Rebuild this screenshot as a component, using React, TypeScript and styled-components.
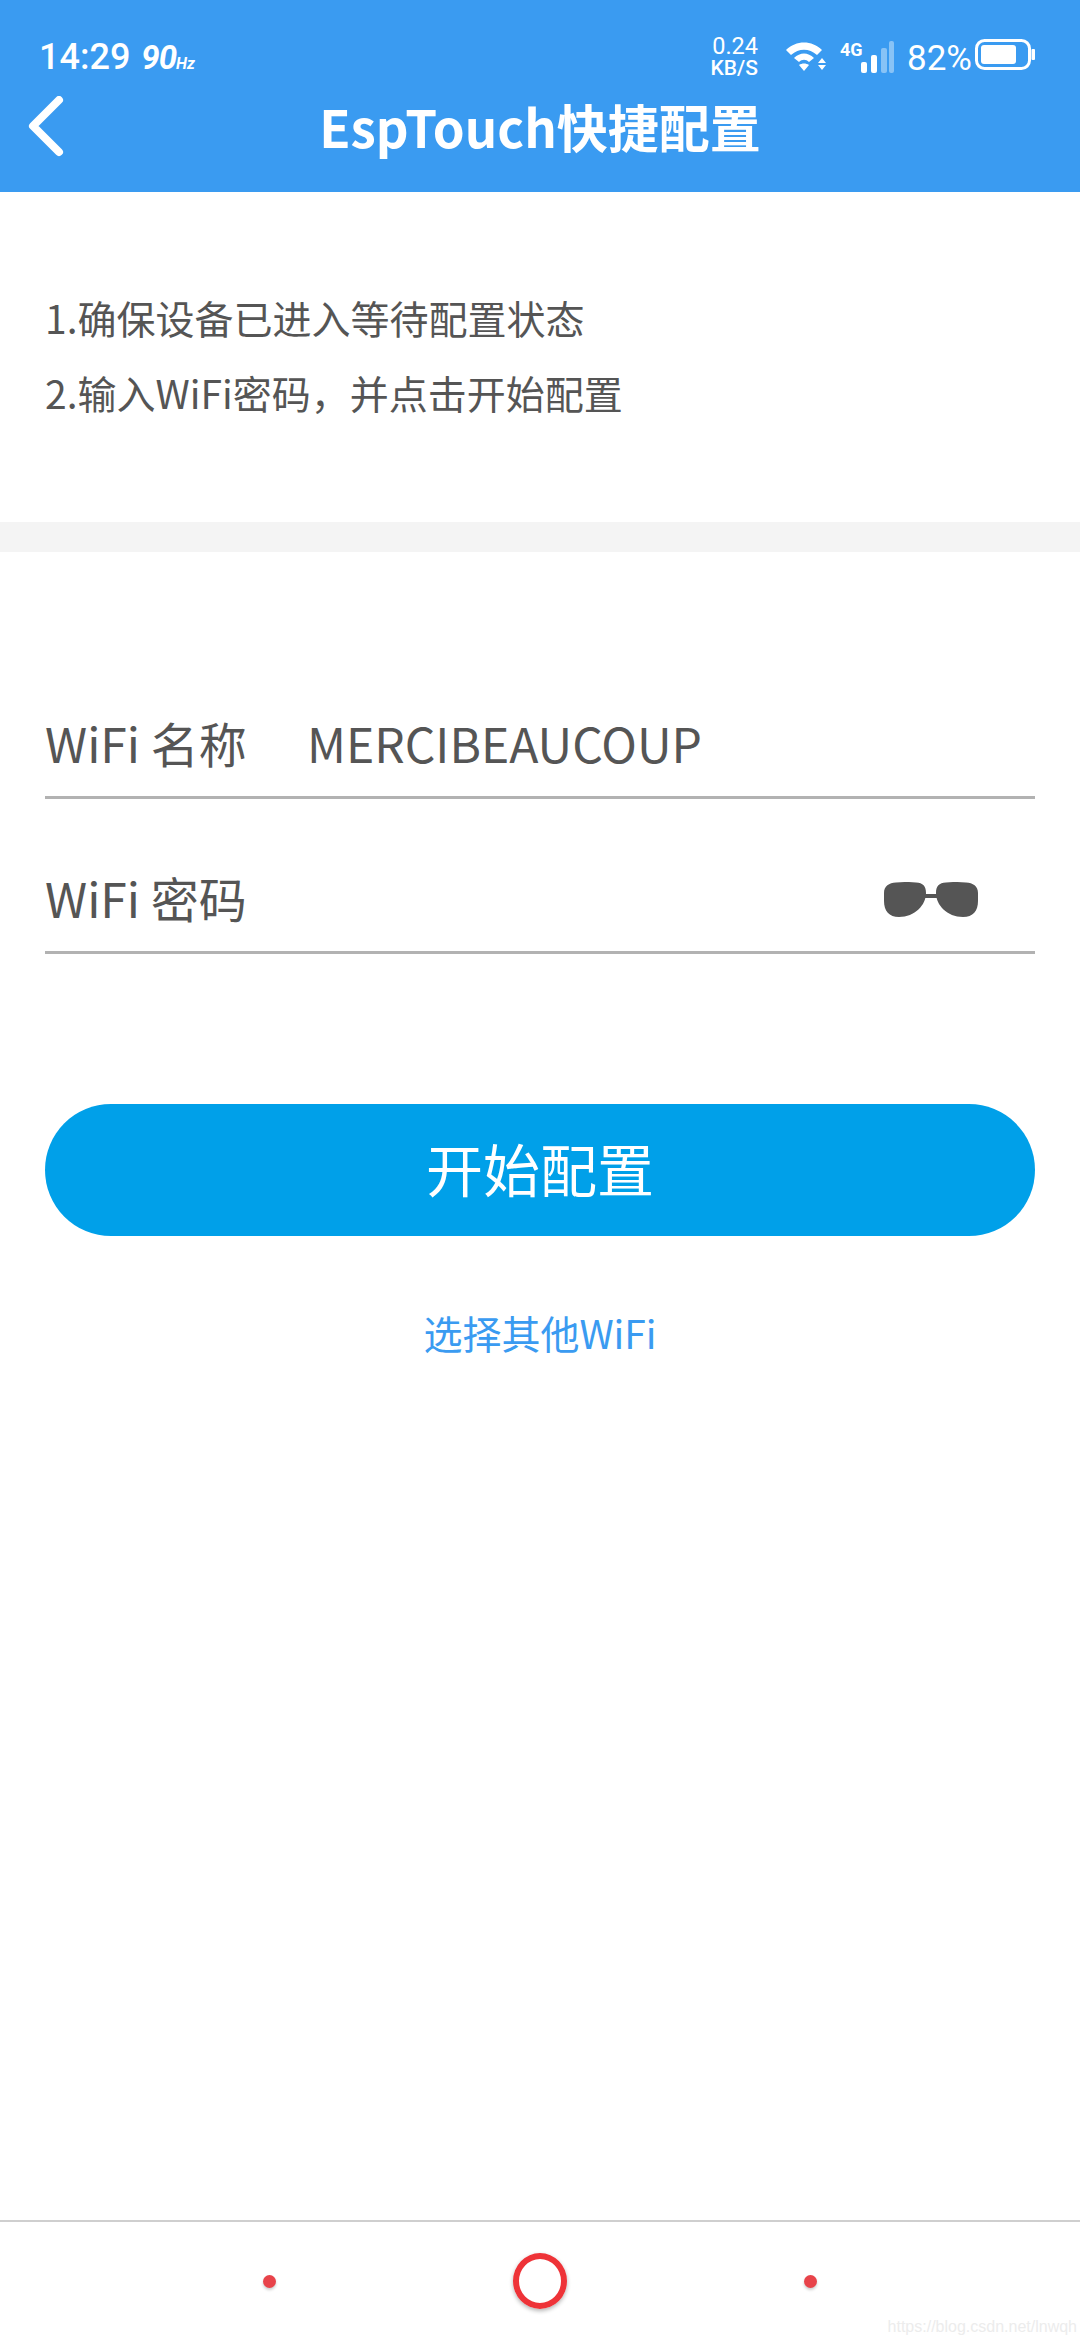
import React from "react";
import styled, { createGlobalStyle } from "styled-components";

const Global = createGlobalStyle`
  html, body { margin: 0; padding: 0; background: #fff; }
  #root { width: 1080px; height: 2340px; }
`;
const cjk = `"Noto Sans CJK SC", "Noto Sans", sans-serif`;
const Page = styled.div`
  width: 1080px; height: 2340px; display: flex; flex-direction: column; background: #fff;
  font-family: ${cjk}; position: relative; overflow: hidden;
`;
const Header = styled.header`
  height: 192px; background: #3a9bf1; color: #fff; display: flex; flex-direction: column; flex: none;
`;
const StatusBar = styled.div`
  height: 96px; padding: 32px 45px 0 39px; box-sizing: border-box; display: flex; align-items: flex-start; justify-content: space-between;
  font-family: Roboto, sans-serif;
`;
const StatusLeft = styled.div`display: flex; align-items: baseline; height: 50px; box-sizing: border-box;`;
const Clock = styled.span`font-size: 36px; line-height: 50px; font-weight: 500;`;
const Hz = styled.span`font-size: 33px; line-height: 50px; font-style: italic; font-weight: 700; margin-left: 11px; letter-spacing: -1px;`;
const HzUnit = styled.span`font-size: 16px; font-style: italic; font-weight: 700; margin-left: 0;`;
const StatusRight = styled.div`display: flex; align-items: flex-start;`;
const Speed = styled.div`
  display: flex; flex-direction: column; align-items: flex-end; width: 54px; margin: 3px 0 0 0;
`;
const SpeedVal = styled.span`font-size: 23.5px; line-height: 22px; font-weight: 400;`;
const SpeedUnit = styled.span`font-size: 21px; line-height: 22px; font-weight: 500;`;
const Percent = styled.span`font-size: 35px; line-height: 46px; font-weight: 400; margin: 4px 3px 0 13px;`;
const IconSvg = styled.svg`display: block; flex: none; overflow: visible;`;
const Nav = styled.div`
  flex: 1; position: relative; display: flex; justify-content: center; align-items: flex-start;
`;
const BackIcon = styled.svg`position: absolute; left: 28px; top: 0;`;
const Title = styled.h1`
  margin: 0; font-size: 51px; font-weight: 700; line-height: 60px; position: relative;
  font-family: ${cjk};
`;
const Intro = styled.section`
  height: 330px; flex: none; box-sizing: border-box; padding: 88px 45px 0; color: #555; font-size: 39px; line-height: 75px;
`;
const IntroLine = styled.div``;
const Band = styled.div`height: 30px; background: #f4f4f4; flex: none;`;
const Form = styled.section`padding: 90px 45px 0; flex: none;`;
const Field = styled.div`
  height: 155px; box-sizing: border-box; border-bottom: 3px solid #b2b2b2; display: flex; align-items: flex-end;
  padding-bottom: 21px; color: #555; font-size: 48px; line-height: 66px; position: relative;
`;
const FirstField = styled(Field)`height: 157px;`;
const Label = styled.span`width: 262px; flex: none;`;
const Value = styled.span``;
const Eye = styled.svg`position: absolute; right: 57px; top: 83px;`;
const Submit = styled.button`
  display: block; width: 990px; height: 132px; margin: 150px 45px 0; border: 0; border-radius: 66px; background: #00a0e9; color: #fff;
  font-family: ${cjk}; font-size: 57px; line-height: 126px; padding: 0 0 6px;
`;
const Link = styled.div`
  margin-top: 68px; text-align: center; color: #3a9bf1; font-size: 39px; line-height: 56px;
`;
const Spacer = styled.div`flex: 1;`;
const BottomBar = styled.nav`
  height: 120px; flex: none; border-top: 2px solid #cfcfcf; box-sizing: border-box; position: relative; background: #fff;
`;
const BottomRow = styled.div`
  height: 118px; display: flex; align-items: center; justify-content: center; gap: 237px;
`;
const Dot = styled.span`
  width: 13px; height: 13px; border-radius: 50%; background: #e8434a; box-shadow: 0 2px 3px rgba(0,0,0,.2);
`;
const Ring = styled.span`
  width: 54px; height: 56px; border-radius: 50%; border: 6px solid #ee3338; box-sizing: border-box; box-shadow: 0 2px 4px rgba(0,0,0,.3);
`;
const Watermark = styled.span`
  position: absolute; right: 3px; bottom: 4px; font-family: "Liberation Sans", sans-serif; font-size: 16px; color: #ececec;
`;

export default function App() {
  return (
    <Page>
      <Global />
      <Header>
        <StatusBar>
          <StatusLeft>
            <Clock>14:29</Clock>
            <Hz>90</Hz>
            <HzUnit>Hz</HzUnit>
          </StatusLeft>
          <StatusRight>
            <Speed>
              <SpeedVal>0.24</SpeedVal>
              <SpeedUnit>KB/S</SpeedUnit>
            </Speed>
            <IconSvg width="44" height="34" viewBox="0 0 44 34" style={{ margin: "6px 0 0 27px" }}>
              <path d="M1 12 C11 2 27 2 37 12 L32 17 C24 10 14 10 6 17 Z M9 20 C15 14 23 14 29 20 L24 24 C21 21 17 21 14 24 Z M19 33 L14 27 C17 25 21 25 24 27 Z" fill="#fff" />
              <path d="M37 20 L41 25 H33 Z M33 27 H41 L37 32 Z" fill="#fff" />
            </IconSvg>
            <IconSvg width="54" height="32" viewBox="0 0 54 32" style={{ margin: "9px 0 0 11px" }}>
              <text x="0" y="15" fontFamily="Roboto" fontWeight="700" fontSize="18" fill="#fff">4G</text>
              <rect x="21" y="21" width="6" height="11" rx="2" fill="#fff" />
              <rect x="31" y="14" width="6" height="18" rx="2" fill="#fff" />
              <rect x="41" y="7" width="6" height="25" rx="2" fill="#fff" fillOpacity=".4" />
              <rect x="49" y="0" width="5" height="32" rx="2" fill="#fff" fillOpacity=".4" />
            </IconSvg>
            <Percent>82%</Percent>
            <IconSvg width="60" height="32" viewBox="0 0 60 32" style={{ margin: "7px 0 0 0" }}>
              <rect x="1.5" y="1.5" width="53" height="28" rx="8" fill="none" stroke="#fff" strokeWidth="3" />
              <rect x="6" y="6" width="35" height="19" rx="3" fill="#fff" />
              <rect x="56.5" y="10" width="3.5" height="11" rx="1" fill="#fff" />
            </IconSvg>
          </StatusRight>
        </StatusBar>
        <Nav>
          <BackIcon width="40" height="64" viewBox="0 0 40 64">
            <path d="M31 4 L5 30 L31 56" fill="none" stroke="#fff" strokeWidth="8" strokeLinecap="round" strokeLinejoin="round" />
          </BackIcon>
          <Title>EspTouch快捷配置</Title>
        </Nav>
      </Header>
      <Intro>
        <IntroLine>1.确保设备已进入等待配置状态</IntroLine>
        <IntroLine>2.输入WiFi密码，并点击开始配置</IntroLine>
      </Intro>
      <Band />
      <Form>
        <FirstField>
          <Label>WiFi 名称</Label>
          <Value>MERCIBEAUCOUP</Value>
        </FirstField>
        <Field>
          <Label>WiFi 密码</Label>
          <Eye width="94" height="36" viewBox="0 0 94 36">
            <path d="M12 0.5 C20 -0.2 26 -0.2 32 0.5 C39 1 42 4 42 11 C42 23 31 35 15 35 C5 35 0 29 0 19 V11 C0 4 5 1 12 0.5 Z" fill="#555" />
            <path d="M82 0.5 C74 -0.2 68 -0.2 62 0.5 C55 1 52 4 52 11 C52 23 63 35 79 35 C89 35 94 29 94 19 V11 C94 4 89 1 82 0.5 Z" fill="#555" />
            <rect x="41" y="12" width="12" height="4" fill="#555" />
          </Eye>
        </Field>
      </Form>
      <Submit>开始配置</Submit>
      <Link>选择其他WiFi</Link>
      <Spacer />
      <BottomBar>
        <BottomRow>
          <Dot />
          <Ring />
          <Dot />
        </BottomRow>
        <Watermark>https://blog.csdn.net/lnwqh</Watermark>
      </BottomBar>
    </Page>
  );
}
